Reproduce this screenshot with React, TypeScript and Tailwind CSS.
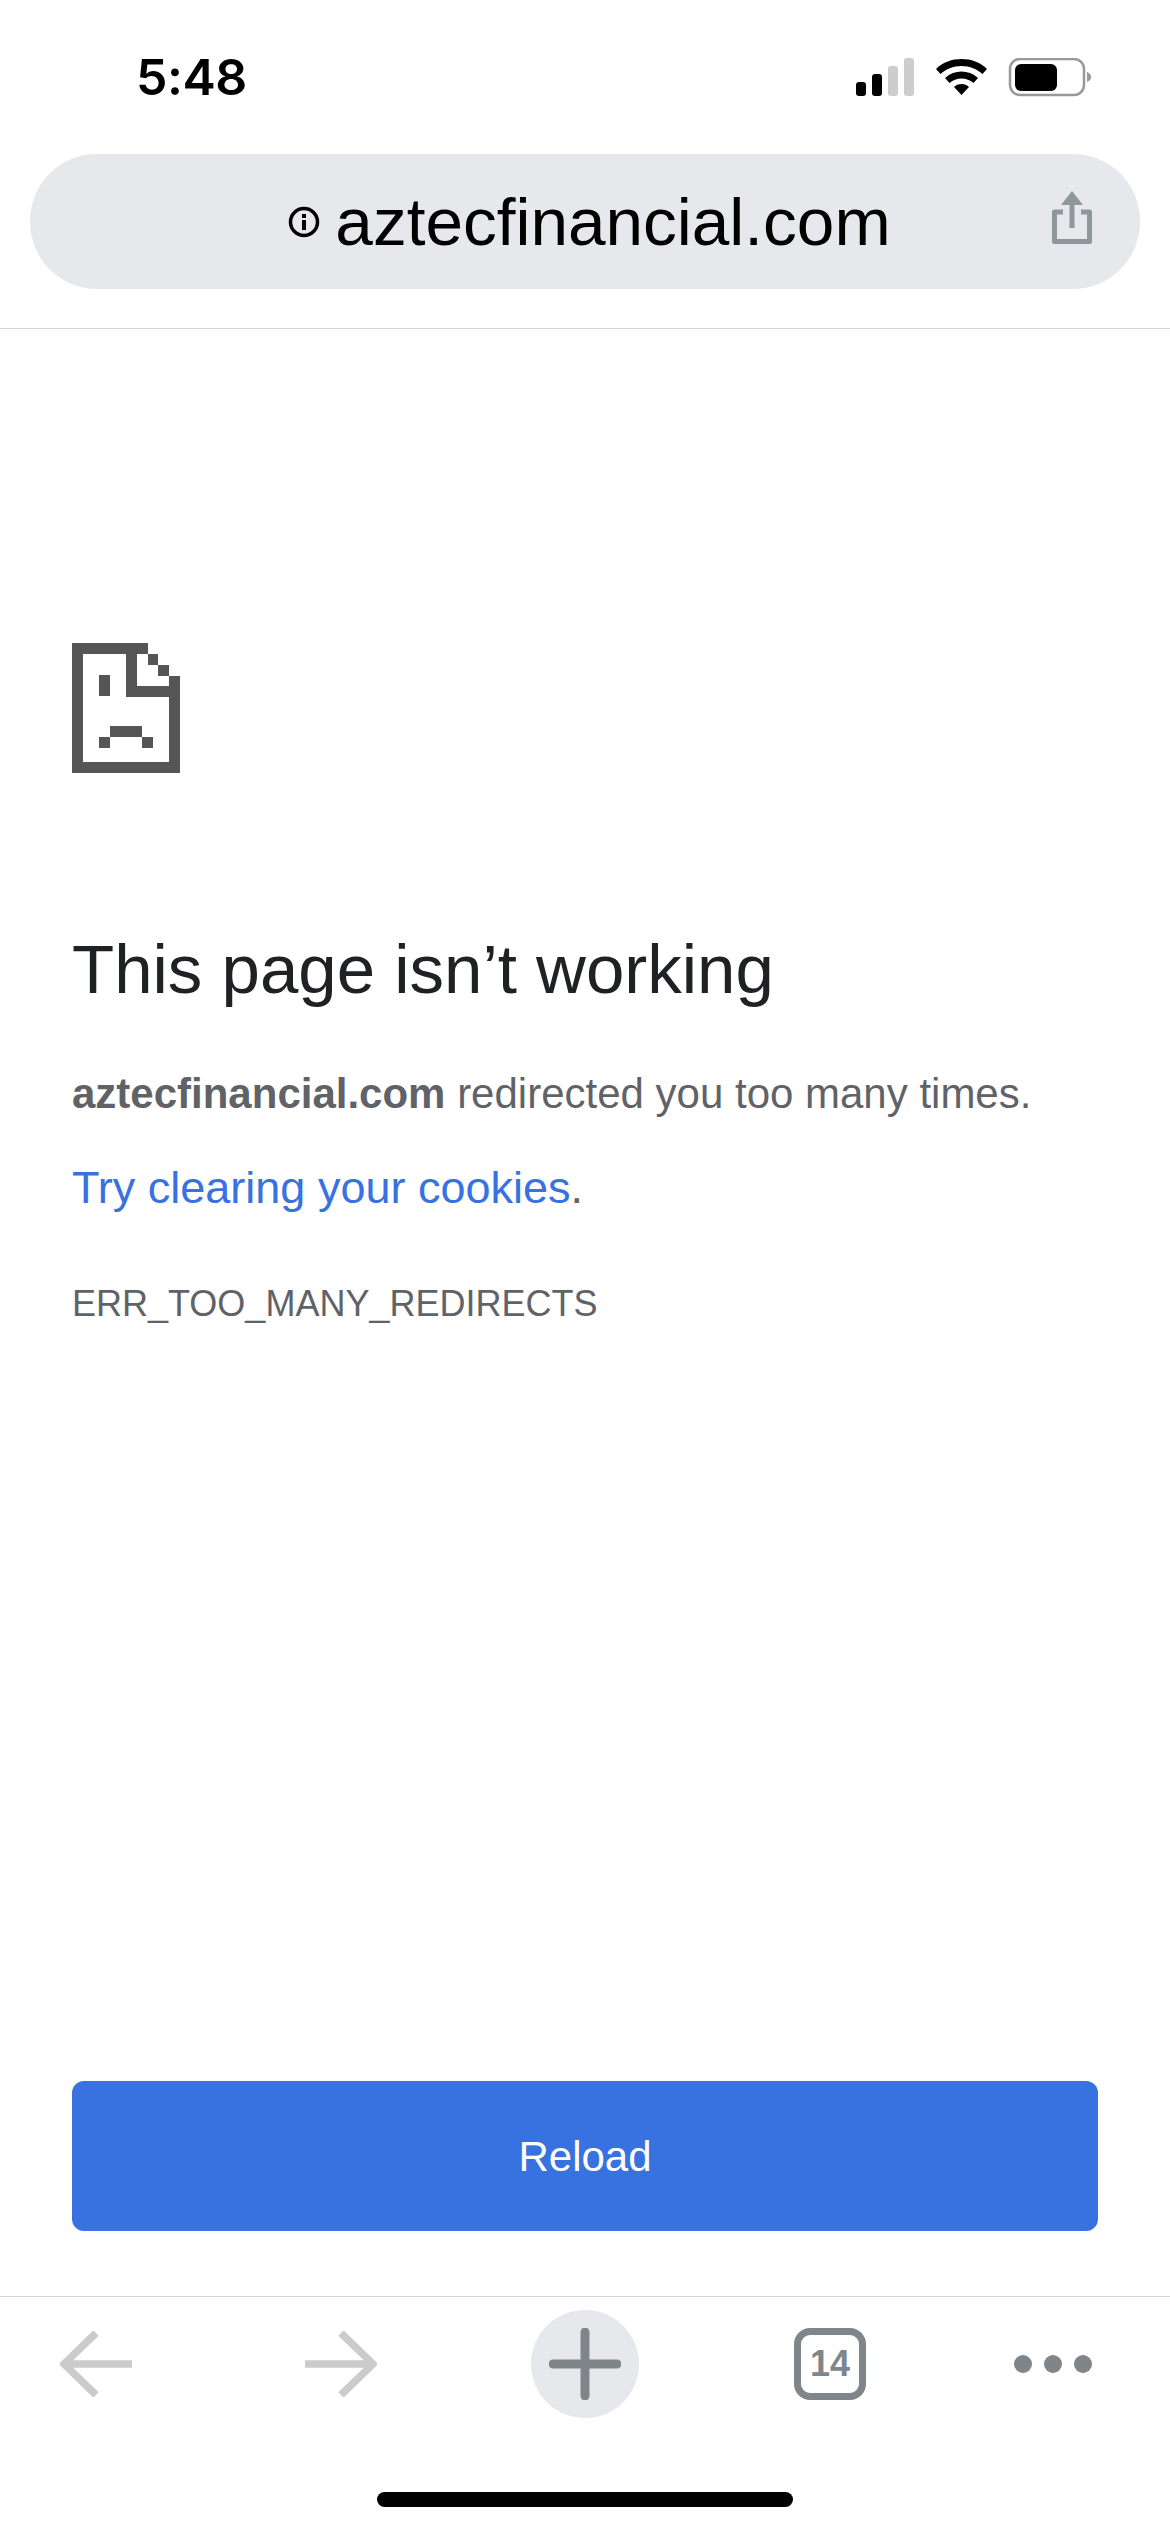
const sans = "font-['Liberation_Sans',Arial,sans-serif]";

function SadPage() {
  return (
    <svg width="108" height="130" viewBox="0 0 100 120" className="block" shapeRendering="crispEdges" fill="#555555">
      <path d="M0 0H70V10H60V40H90V30H100V120H0ZM10 10V110H90V50H50V10Z" fillRule="evenodd" />
      <rect x="70" y="10" width="10" height="10" />
      <rect x="80" y="20" width="10" height="10" />
      <rect x="25" y="29" width="10" height="20" />
      <rect x="35" y="77" width="30" height="10" />
      <rect x="25" y="87" width="10" height="10" />
      <rect x="65" y="87" width="10" height="10" />
    </svg>
  );
}

function StatusIcons() {
  return (
    <svg width="240" height="40" viewBox="0 0 240 40" className="block">
      <rect x="0" y="24" width="10" height="14" rx="3" fill="#000" />
      <rect x="16" y="16" width="10" height="22" rx="3" fill="#000" />
      <rect x="32" y="8" width="10" height="30" rx="3" fill="#cdcdcd" />
      <rect x="48" y="0" width="10" height="38" rx="3" fill="#cdcdcd" />
      <path d="M80 11C87 4 96 1 105.5 1S124 4 131 11L126.5 16C121 11 114 8 105.5 8S90 11 84.5 16Z" fill="#000" />
      <path d="M89 20C94 15.5 99.5 13.5 105.5 13.5S117 15.5 122 20L117.5 25C114 22 110 20.5 105.5 20.5S97 22 93.5 25Z" fill="#000" />
      <path d="M98 29C100 27 102.5 26 105.5 26S111 27 113 29L105.5 37Z" fill="#000" />
      <rect x="154" y="1" width="74" height="36" rx="10" fill="none" stroke="#999999" strokeWidth="2.5" />
      <rect x="159" y="6" width="42" height="27" rx="6" fill="#000" />
      <path d="M231 14C234 15 235 17 235 19S234 23 231 24Z" fill="#999999" />
    </svg>
  );
}

function InfoIcon() {
  return (
    <svg width="32" height="32" viewBox="0 0 32 32" className="block shrink-0">
      <circle cx="16" cy="16" r="13.5" fill="none" stroke="#000" strokeWidth="3.5" />
      <rect x="14" y="14" width="4" height="10" fill="#000" />
      <rect x="14" y="8" width="4" height="4" fill="#000" />
    </svg>
  );
}

function ShareIcon() {
  return (
    <svg width="42" height="54" viewBox="0 0 42 54" className="block">
      <path d="M12 21H3.5V50.5H38.5V21H30" fill="none" stroke="#90969b" strokeWidth="5" strokeLinejoin="round" />
      <path d="M21 37V4" fill="none" stroke="#90969b" strokeWidth="5" />
      <path d="M21 0L32 14H10Z" fill="#90969b" />
    </svg>
  );
}

function BackArrow({ flip }: { flip?: boolean }) {
  return (
    <svg width="72" height="66" viewBox="0 0 72 66" className={flip ? "block -scale-x-100" : "block"}>
      <path d="M72 33H6M36 2L4 33L36 64" fill="none" stroke="#cbcbcb" strokeWidth="7.5" />
    </svg>
  );
}

function PlusIcon() {
  return (
    <svg width="72" height="72" viewBox="0 0 72 72" className="block">
      <path d="M36 4V68M4 36H68" fill="none" stroke="#80858a" strokeWidth="9" strokeLinecap="round" />
    </svg>
  );
}

export default function App() {
  return (
    <div className={`${sans} flex h-[2532px] w-[1170px] flex-col overflow-hidden bg-white`}>
      <header className="flex h-[329px] shrink-0 flex-col border-b border-[#d3d3d3]">
        <div className="flex h-[154px] items-start justify-between pl-[136px] pr-[74px] pt-[49px]">
          <span className="font-['Inter',sans-serif] text-[50px] font-semibold leading-[56px] tracking-[-0.5px] text-black">5:48</span>
          <div className="pt-[9px]">
            <StatusIcons />
          </div>
        </div>
        <div className="relative mx-[30px] flex h-[135px] items-center justify-center rounded-[67px] bg-[#e7e8ec]">
          <div className="flex items-center gap-[15px] pl-[9px]">
            <InfoIcon />
            <span className="text-[67.5px] leading-[80px] text-black">aztecfinancial.com</span>
          </div>
          <div className="absolute right-[47px] top-[37px]">
            <ShareIcon />
          </div>
        </div>
      </header>

      <main className="flex flex-1 flex-col px-[72px]">
        <div className="pt-[314px]">
          <SadPage />
        </div>
        <h1 className="mt-[157px] text-[69px] font-normal leading-[80px] text-[#202124]">This page isn’t working</h1>
        <p className="mt-[59px] text-[42px] leading-[50px] text-[#5f6368]">
          <strong className="font-bold">aztecfinancial.com</strong> redirected you too many times.
        </p>
        <p className="mt-[44px] text-[45px] leading-[50px] text-[#5f6368]">
          <span className="text-[#3871e0]">Try clearing your cookies</span>.
        </p>
        <p className="mt-[66px] text-[36px] leading-[50px] text-[#5f6368]">ERR_TOO_MANY_REDIRECTS</p>
        <div className="mt-auto pb-[65px]">
          <button className="flex h-[150px] w-[1026px] items-center justify-center rounded-[12px] bg-[#3871e0] text-[42px] text-white">
            Reload
          </button>
        </div>
      </main>

      <footer className="flex h-[236px] shrink-0 flex-col border-t border-[#d3d3d3]">
        <div className="flex h-[133px] items-center pl-[60px]">
          <BackArrow />
          <div className="ml-[173px]">
            <BackArrow flip />
          </div>
          <div className="ml-[154px] flex h-[108px] w-[108px] items-center justify-center rounded-full bg-[#e7e8ec]">
            <PlusIcon />
          </div>
          <div className="ml-[155px] flex h-[72px] w-[72px] items-center justify-center rounded-[16px] border-[7px] border-[#80858a] text-[36px] font-bold text-[#80858a]">
            14
          </div>
          <div className="ml-[148px] flex gap-[12px]">
            <span className="h-[18px] w-[18px] rounded-full bg-[#80858a]" />
            <span className="h-[18px] w-[18px] rounded-full bg-[#80858a]" />
            <span className="h-[18px] w-[18px] rounded-full bg-[#80858a]" />
          </div>
        </div>
        <div className="mt-[62px] flex justify-center">
          <div className="h-[15px] w-[416px] rounded-full bg-black" />
        </div>
      </footer>
    </div>
  );
}
